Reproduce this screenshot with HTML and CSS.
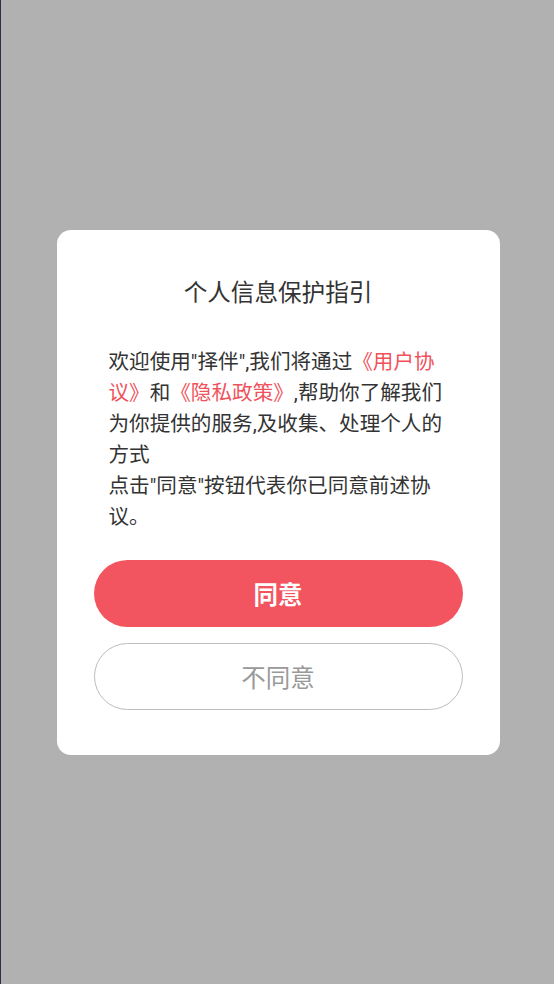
FILE: index.html
```html
<!DOCTYPE html>
<html lang="zh-CN">
<head>
<meta charset="utf-8">
<title>个人信息保护指引</title>
<link rel="stylesheet" href="styles.css">
</head>
<body>
<div class="screen">
  <div class="dialog">
    <h1 class="title">个人信息保护指引</h1>
    <p class="content">欢迎使用"择伴",我们将通过<span class="link">《用户协议》</span>和<span class="link">《隐私政策》</span>,帮助你了解我们为你提供的服务,及收集、处理个人的方式<br>点击"同意"按钮代表你已同意前述协议。</p>
    <div class="actions">
      <button class="btn btn-agree">同意</button>
      <button class="btn btn-disagree">不同意</button>
    </div>
  </div>
</div>
</body>
</html>
```

FILE: styles.css
```css
* { box-sizing: border-box; }
html, body { margin: 0; padding: 0; }
body {
  width: 554px;
  height: 984px;
  background: #b1b1b1;
  font-family: "Roboto", "Noto Sans CJK SC", sans-serif;
}
.screen {
  height: 984px;
  border-left: 1px solid #2e2e44;
  display: flex;
  align-items: center;
  justify-content: center;
  padding-left: 1px;
}
.dialog {
  width: 443px;
  height: 525px;
  background: #ffffff;
  border-radius: 14px;
  padding: 47px 37px 44px;
  display: flex;
  flex-direction: column;
}
.title {
  margin: 0;
  font-size: 23.6px;
  line-height: 32px;
  font-weight: 400;
  color: #333333;
  text-align: center;
}
.content {
  margin: 38px 14px 0 15px;
  font-size: 20.6px;
  line-height: 31px;
  color: #333333;
}
.link { color: #f0525c; }
.actions {
  margin-top: 27px;
  display: flex;
  flex-direction: column;
  gap: 16px;
}
.btn {
  height: 67px;
  border-radius: 34px;
  font-family: "Roboto", "Noto Sans CJK SC", sans-serif;
  font-size: 24.5px;
  cursor: pointer;
}
.btn-agree {
  background: #f2555f;
  border: none;
  color: #ffffff;
  font-weight: 700;
}
.btn-disagree {
  background: #ffffff;
  border: 1px solid #bdbdbd;
  color: #999999;
  font-weight: 400;
}
```
